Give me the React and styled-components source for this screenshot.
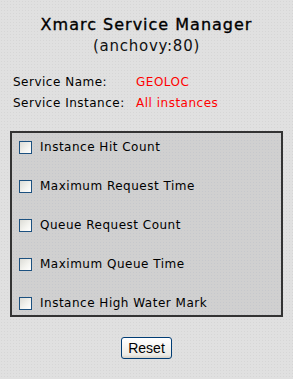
import React from 'react'
import styled, { createGlobalStyle } from 'styled-components'

const GlobalStyle = createGlobalStyle`
  html, body {
    margin: 0;
    padding: 0;
    background-color: #e0e0e0;
  }
  body {
    font-family: "DejaVu Sans", Verdana, sans-serif;
    width: 293px;
    height: 379px;
    overflow: hidden;
  }
`;

const Page = styled.div`
  display: flex;
  flex-direction: column;
  align-items: center;
  width: 293px;
  height: 379px;
  box-sizing: border-box;
  padding-top: 15px;
  background-color: #e0e0e0;
  background-image: radial-gradient(#d6d6d6 0.6px, transparent 0.7px);
  background-size: 3px 3px;
`;

const Title = styled.div`
  font-size: 16px;
  color: #000;
  line-height: 19px;
  letter-spacing: 1px;
  text-align: center;
  -webkit-text-stroke: 0.35px #000;
`;

const Host = styled.div`
  margin-top: 3px;
  font-size: 15px;
  color: #111;
  line-height: 18px;
  letter-spacing: 0.75px;
  text-align: center;
`;

const Info = styled.div`
  align-self: stretch;
  display: grid;
  grid-template-columns: 123px 1fr;
  row-gap: 5px;
  padding: 0 13px;
  margin-top: 19px;
  font-size: 12px;
  line-height: 16px;
  letter-spacing: 0.5px;
`;

const Label = styled.div`
  color: #000;
  white-space: nowrap;
`;

const Value = styled.div`
  color: #ff0000;
`;

const Panel = styled.div`
  align-self: stretch;
  margin: 20px 10px 0;
  border: 2px solid #333;
  background-color: #d0d0d0;
  background-image: radial-gradient(#c6c8cc 0.6px, transparent 0.7px);
  background-size: 3px 3px;
  display: flex;
  flex-direction: column;
  gap: 21px;
  padding: 5px 7px 3px 7px;
`;

const Row = styled.label`
  display: flex;
  align-items: center;
  gap: 8px;
  height: 18px;
  font-size: 12px;
  color: #000;
  letter-spacing: 0.5px;
`;

const Box = styled.span`
  width: 11px;
  height: 11px;
  border: 1px solid #1c5180;
  background: linear-gradient(135deg, #dcdcd6 0%, #f4f4f0 60%, #ffffff 100%);
  flex: none;
`;

const Button = styled.button`
  margin-top: 20px;
  font-family: "Liberation Sans", Arial, sans-serif;
  font-size: 14px;
  color: #000;
  width: 51px;
  height: 22px;
  padding: 0;
  border: 1px solid #003c74;
  border-radius: 3px;
  background: linear-gradient(#ffffff, #ecebe6 85%, #d6d0c5);
`;

const items = [
  'Instance Hit Count',
  'Maximum Request Time',
  'Queue Request Count',
  'Maximum Queue Time',
  'Instance High Water Mark',
]

const App = () => {
  return (
    <Page>
      <GlobalStyle />
      <Title>Xmarc Service Manager</Title>
      <Host>(anchovy:80)</Host>
      <Info>
        <Label>Service Name:</Label>
        <Value>GEOLOC</Value>
        <Label>Service Instance:</Label>
        <Value>All instances</Value>
      </Info>
      <Panel>
        {items.map((item) => (
          <Row key={item}>
            <Box />
            {item}
          </Row>
        ))}
      </Panel>
      <Button>Reset</Button>
    </Page>
  )
}

export default App
